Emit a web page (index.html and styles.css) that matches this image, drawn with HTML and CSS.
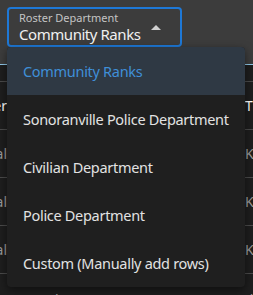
FILE: index.html
```html
<!DOCTYPE html>
<html lang="en">
<head>
  <meta charset="UTF-8">
  <title>Roster Department</title>
  <link rel="stylesheet" href="styles.css">
</head>
<body>

<div class="page">
  <div class="toolbar">
    <div class="field">
      <div class="field-text">
        <span class="field-label">Roster Department</span>
        <span class="field-value">Community Ranks</span>
      </div>
      <svg class="caret" width="10" height="5" viewBox="0 0 10 5"><path d="M0 5 L5 0 L10 5 Z" fill="#d0d0d0"/></svg>
    </div>
  </div>

  <div class="table">
    <div class="row row-top"></div>
    <div class="row head">
      <span class="cell-l">Member</span>
      <span class="cell-r">Title</span>
    </div>
    <div class="row">
      <span class="cell-l">Capital</span>
      <span class="cell-r">Kansas</span>
    </div>
    <div class="row">
      <span class="cell-l">Capital</span>
      <span class="cell-r">Kansas</span>
    </div>
    <div class="row">
      <span class="cell-l">Capital</span>
      <span class="cell-r">Kansas</span>
    </div>
    <div class="add-row">
      <span class="add">+ Rule</span>
      <span class="cell-r">Edit</span>
    </div>
  </div>

  <ul class="menu">
    <li class="selected">Community Ranks</li>
    <li>Sonoranville Police Department</li>
    <li>Civilian Department</li>
    <li>Police Department</li>
    <li>Custom (Manually add rows)</li>
  </ul>
</div>

</body>
</html>
```

FILE: styles.css
```css
body {
  margin: 0;
  font-family: "Noto Sans", "Open Sans", sans-serif;
  background-color: #1e1e1e;
  color: #e6e6e6;
}

.page {
  position: relative;
  width: 253px;
  height: 295px;
  overflow: hidden;
}

.toolbar {
  height: 64px;
  background-color: #3c3c3c;
  padding: 7px;
  box-sizing: border-box;
}

.field {
  width: 175px;
  height: 40px;
  box-sizing: border-box;
  border: 2px solid #1e78d6;
  border-radius: 4px;
  display: flex;
  align-items: center;
  padding: 0 19px 0 10px;
  white-space: nowrap;
}

.field-text {
  display: flex;
  flex-direction: column;
  flex: 1;
}

.field-label {
  font-size: 11px;
  line-height: 13px;
  color: #c4c4c4;
}

.field-value {
  font-size: 15px;
  line-height: 20px;
  letter-spacing: -0.45px;
  color: #f0f0f0;
}

.caret {
  margin-top: 1px;
}

.table {
  border-top: 1px solid #8fc7e8;
}

.row {
  height: 47px;
  border-bottom: 1px solid #4a4a4a;
  display: flex;
  justify-content: space-between;
  align-items: center;
  font-size: 14px;
  color: #9a9a9a;
}

.row-top {
  height: 16px;
}

.head {
  color: #ffffff;
}

.cell-l {
  width: 7px;
  overflow: hidden;
  display: flex;
  justify-content: flex-end;
  white-space: nowrap;
}

.cell-r {
  width: 8px;
  overflow: hidden;
  white-space: nowrap;
}

.add-row {
  display: flex;
  justify-content: space-between;
  padding: 16px 0 0 26px;
  font-size: 14px;
  color: #9a9a9a;
}

.add-row .cell-r {
  width: 16px;
}

.menu {
  position: absolute;
  top: 47px;
  left: 7px;
  width: 238px;
  margin: 0;
  padding: 0;
  list-style: none;
  background-color: #1f1f1f;
  border-radius: 4px;
  box-shadow: 0 3px 8px rgba(0, 0, 0, 0.5);
  overflow: hidden;
}

.menu li {
  height: 48px;
  display: flex;
  align-items: center;
  padding-left: 16px;
  font-size: 14.5px;
  letter-spacing: -0.3px;
  color: #e2e2e2;
  white-space: nowrap;
}

.menu li.selected {
  background-color: #2f3944;
  color: #3f8fd8;
}
```
